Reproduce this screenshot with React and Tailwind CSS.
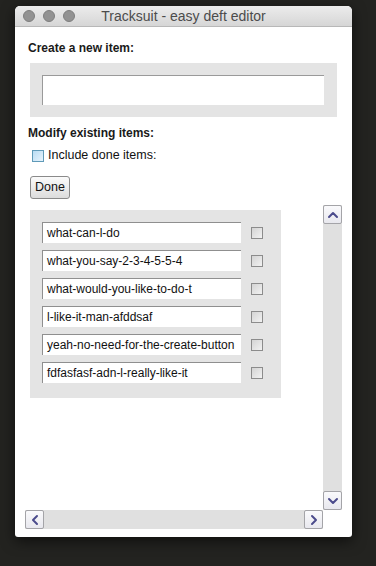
import React from "react";

const items = [
  "what-can-l-do",
  "what-you-say-2-3-4-5-5-4",
  "what-would-you-like-to-do-t",
  "l-like-it-man-afddsaf",
  "yeah-no-need-for-the-create-button",
  "fdfasfasf-adn-l-really-like-it",
];

const Chevron = ({ dir }) => {
  const paths = {
    up: "M3 9 L7 5 L11 9",
    down: "M3 5 L7 9 L11 5",
    left: "M9 3 L5 7 L9 11",
    right: "M5 3 L9 7 L5 11",
  };
  return (
    <svg width="14" height="14" viewBox="0 0 14 14">
      <path d={paths[dir]} fill="none" stroke="#4b4b8c" strokeWidth="2" strokeLinecap="round" strokeLinejoin="round" />
    </svg>
  );
};

const ScrollButton = ({ dir }) => (
  <div className="flex h-[19px] w-[19px] shrink-0 items-center justify-center rounded-[2px] border border-[#a4a4a8] bg-gradient-to-b from-[#fafafc] to-[#e8e8ee]">
    <Chevron dir={dir} />
  </div>
);

const Row = ({ text }) => (
  <div className="flex items-center">
    <div className="flex h-[21px] w-[199px] items-center border-l border-t border-[#8f8f8f] border-b-[#ececec] border-r-[#ececec] bg-white pl-[4px] text-[12px] text-[#111]">
      {text}
    </div>
    <div className="ml-[10px] h-[12px] w-[12px] border border-[#8c8c8c] bg-gradient-to-br from-[#d4d4d4] to-[#f2f2f2]" />
  </div>
);

export default function App() {
  return (
    <div
      className="h-[566px] w-[376px] overflow-hidden bg-[#232320] pt-[6px] pl-[15px]"
      style={{ fontFamily: '"Liberation Sans", Arial, sans-serif' }}
    >
      <div className="flex h-[531px] w-[337px] flex-col overflow-hidden rounded-t-[5px] rounded-b-[3px] bg-white shadow-[0_4px_14px_rgba(0,0,0,0.6)]">
        <div className="relative flex h-[21px] shrink-0 items-center justify-center border-b border-[#b8b8b8] bg-gradient-to-b from-[#ececec] to-[#d6d6d6]">
          <div className="absolute left-[8px] top-[4px] flex gap-[8px]">
            <div className="h-[12px] w-[12px] rounded-full border border-[#7e7e7e] bg-[#929292]" />
            <div className="h-[12px] w-[12px] rounded-full border border-[#7e7e7e] bg-[#929292]" />
            <div className="h-[12px] w-[12px] rounded-full border border-[#7e7e7e] bg-[#929292]" />
          </div>
          <span className="text-[14px] text-[#4c4c4c]">Tracksuit - easy deft editor</span>
        </div>

        <div className="flex flex-col">
          <div className="mt-[14px] ml-[13px] h-[14px] text-[12px] font-bold leading-[14px] text-[#1a1a1a]">
            Create a new item:
          </div>
          <div className="mt-[8px] ml-[15px] w-[307px] bg-[#e4e4e4] pt-[12px] pb-[12px] pl-[12px] pr-[13px]">
            <div className="h-[30px] w-full border-l border-t border-[#9a9a9a] border-b-[#f0f0f0] border-r-[#f0f0f0] bg-white" />
          </div>
          <div className="mt-[9px] ml-[13px] h-[14px] text-[12px] font-bold leading-[14px] text-[#1a1a1a]">
            Modify existing items:
          </div>
          <div className="mt-[9px] ml-[17px] flex h-[13px] items-center">
            <div className="h-[12px] w-[12px] border border-[#5f9ab8] bg-gradient-to-br from-[#b9dcf3] to-[#e6f3fc]" />
            <span className="ml-[4px] text-[12.5px] leading-[13px] text-[#111]">Include done items:</span>
          </div>
          <div className="mt-[14px] ml-[15px] flex h-[23px] w-[40px] items-center justify-center rounded-[3px] border border-[#8a8a8a] bg-gradient-to-b from-[#fbfbfb] to-[#dcdcdc] text-[12.5px] text-[#111]">
            Done
          </div>

          <div className="mt-[6px] ml-[10px] flex w-[317px] flex-col">
            <div className="flex h-[305px]">
              <div className="w-[298px] pt-[5px] pl-[5px]">
                <div className="flex w-[251px] flex-col gap-[7px] bg-[#e4e4e4] pt-[12px] pb-[15px] pl-[12px]">
                  {items.map((t) => (
                    <Row key={t} text={t} />
                  ))}
                </div>
              </div>
              <div className="flex w-[19px] flex-col bg-[#e0e0e0]">
                <ScrollButton dir="up" />
                <div className="flex-1" />
                <ScrollButton dir="down" />
              </div>
            </div>
            <div className="flex">
              <div className="flex w-[298px] justify-between bg-[#e0e0e0]">
                <ScrollButton dir="left" />
                <ScrollButton dir="right" />
              </div>
            </div>
          </div>
        </div>
      </div>
    </div>
  );
}
